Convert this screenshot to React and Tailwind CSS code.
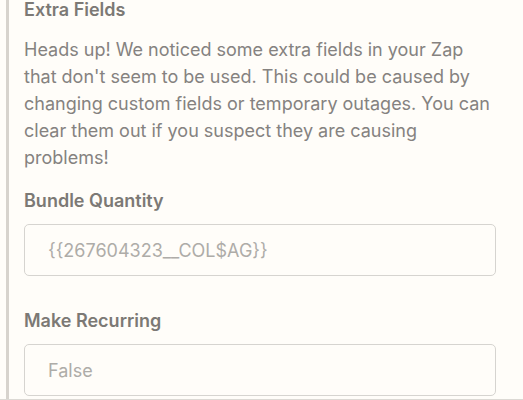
import React from "react";

const fields = [
  { label: "Bundle Quantity", value: "{{267604323__COL$AG}}" },
  { label: "Make Recurring", value: "False" },
];

export default function App() {
  return (
    <div
      className="h-[400px] w-full overflow-hidden bg-[#fffdf9] flex flex-col"
      style={{ fontFamily: "Inter, 'Noto Sans', sans-serif" }}
    >
      <div className="flex-1 flex overflow-hidden">
        {/* left rule */}
        <div className="ml-[6px] w-[3px] bg-[#d7d3cd] flex-shrink-0" />
        <div className="flex-1 pl-[15px] pr-[27px]">
          <h3 className="text-[18px] leading-[20px] font-semibold text-[#7c7975]">
            Extra Fields
          </h3>
          <p className="mt-4 text-[18px] leading-[27px] text-[#858280]">
            Heads up! We noticed some extra fields in your Zap that don't seem
            to be used. This could be caused by changing custom fields or
            temporary outages. You can clear them out if you suspect they are
            causing problems!
          </p>
          <div className="mt-5 flex flex-col gap-[35px]">
            {fields.map((f) => (
              <div key={f.label}>
                <label className="block text-[18px] leading-[20px] font-semibold text-[#7c7975]">
                  {f.label}
                </label>
                <div className="mt-[13px] h-[52px] flex items-center px-[23px] border border-[#d6d4d0] rounded-[5px] bg-[#fffdf9] text-[18px] text-[#aeaca8]">
                  {f.value}
                </div>
              </div>
            ))}
          </div>
        </div>
      </div>
      <div className="h-px bg-[#dcd9d4] flex-shrink-0" />
    </div>
  );
}
